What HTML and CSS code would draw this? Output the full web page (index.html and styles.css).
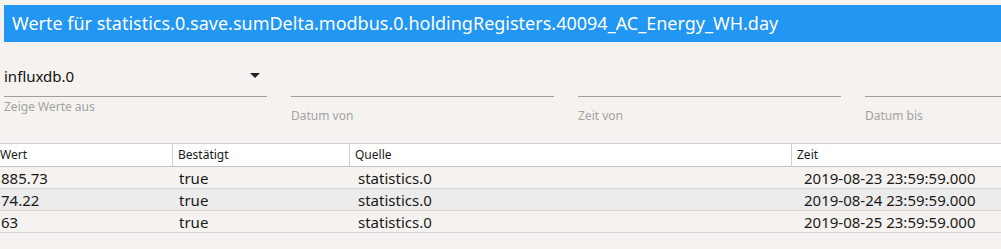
FILE: index.html
```html
<!DOCTYPE html>
<html lang="de">
<head>
<meta charset="utf-8">
<title>Werte</title>
<link rel="stylesheet" href="styles.css">
</head>
<body>
<div class="title">Werte für statistics.0.save.sumDelta.modbus.0.holdingRegisters.40094_AC_Energy_WH.day</div>
<div class="filters">
  <div class="field">
    <div class="control select"><span>influxdb.0</span><span class="arrow"></span></div>
    <div class="helper">Zeige Werte aus</div>
  </div>
  <div class="field">
    <div class="control"></div>
    <div class="label">Datum von</div>
  </div>
  <div class="field">
    <div class="control"></div>
    <div class="label">Zeit von</div>
  </div>
  <div class="field">
    <div class="control"></div>
    <div class="label">Datum bis</div>
  </div>
</div>
<div class="grid">
  <div class="row head">
    <div class="c c1">Wert</div>
    <div class="c c2">Bestätigt</div>
    <div class="c c3">Quelle</div>
    <div class="c c4">Zeit</div>
  </div>
  <div class="row">
    <div class="c c1">885.73</div>
    <div class="c c2">true</div>
    <div class="c c3">statistics.0</div>
    <div class="c c4">2019-08-23 23:59:59.000</div>
  </div>
  <div class="row alt">
    <div class="c c1">74.22</div>
    <div class="c c2">true</div>
    <div class="c c3">statistics.0</div>
    <div class="c c4">2019-08-24 23:59:59.000</div>
  </div>
  <div class="row">
    <div class="c c1">63</div>
    <div class="c c2">true</div>
    <div class="c c3">statistics.0</div>
    <div class="c c4">2019-08-25 23:59:59.000</div>
  </div>
</div>
</body>
</html>
```
FILE: styles.css
```css
html, body {
  margin: 0;
  padding: 0;
  background: #f5f2ef;
  font-family: "Noto Sans", "Open Sans", sans-serif;
  color: #1a1a1a;
  overflow: hidden;
}
.title {
  margin: 5px 0 0 4px;
  height: 37px;
  line-height: 37px;
  background: #2196f3;
  color: #ffffff;
  font-size: 18px;
  padding-left: 8px;
  white-space: nowrap;
}
.filters {
  display: grid;
  grid-template-columns: 263px 263px 263px 1fr;
  column-gap: 24px;
  margin-left: 4px;
  height: 101px;
  margin-top: 0;
}
.field {
  display: flex;
  flex-direction: column;
}
.control {
  margin-top: 18px;
  height: 37px;
  box-sizing: border-box;
  border-bottom: 1px solid #a39e9a;
}
.select {
  display: flex;
  align-items: center;
  justify-content: space-between;
  padding: 0 7px 4px 0;
  font-size: 15px;
  color: #111;
}
.arrow {
  width: 0;
  height: 0;
  border-left: 5px solid transparent;
  border-right: 5px solid transparent;
  border-top: 5px solid #222;
  margin-top: -1px;
}
.helper {
  font-size: 12px;
  line-height: 16px;
  margin-top: 2px;
  color: #a3a3a3;
}
.label {
  font-size: 12px;
  line-height: 16px;
  margin-top: 11px;
  color: #a3a3a3;
}
.grid {
  border-top: 1px solid #cfcfcf;
}
.row {
  display: grid;
  grid-template-columns: 172px 177px 442px 1fr;
  height: 22px;
  box-sizing: border-box;
  border-bottom: 1px solid #d6d6d6;
  font-size: 15px;
  line-height: 22px;
}
.row.alt {
  background: #ececec;
}
.row.head {
  background: #ffffff;
  font-size: 12px;
  border-bottom: 1px solid #c4c4c4;
  height: 23px;
  line-height: 22px;
}
.c {
  white-space: nowrap;
  overflow: hidden;
}
.c1 { padding-left: 1px; }
.c2 { padding-left: 7px; }
.c3 { padding-left: 9px; }
.c4 { padding-left: 13px; }
.head .c1 { padding-left: 0; }
.head .c2, .head .c3, .head .c4 {
  border-left: 1px solid #d0d0d0;
  padding-left: 5px;
}
```
